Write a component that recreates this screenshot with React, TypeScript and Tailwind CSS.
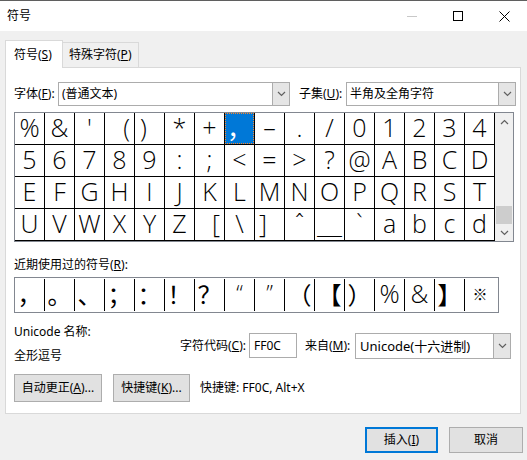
import React from 'react';

const gridRows = [
  '％＆＇（）＊＋，－．／０１２３４',
  '５６７８９：；＜＝＞？＠ＡＢＣＤ',
  'ＥＦＧＨＩＪＫＬＭＮＯＰＱＲＳＴ',
  'ＵＶＷＸＹＺ［＼］＾＿｀ａｂｃｄ',
];

const recent = '，。、；：！？“”（【）％＆】※';

const latin = "font-['Open_Sans','Noto_Sans',sans-serif] font-light";
const cjk = "font-['Noto_Sans_CJK_SC',sans-serif]";

// how each full-width glyph is drawn in the big grid
function glyph(ch: string) {
  switch (ch) {
    case '（':
      return { text: '(', cls: `${latin} justify-end pr-[4px]` };
    case '）':
      return { text: ')', cls: `${latin} justify-start pl-[5px]` };
    case '［':
      return { text: '[', cls: `${latin} justify-end pr-[4px]` };
    case '］':
      return { text: ']', cls: `${latin} justify-start pl-[4px]` };
    case '－':
      return { text: '–', cls: `${latin} justify-center` };
    case '＾':
      return { text: 'ˆ', cls: `${latin} justify-center` };
    case '，':
    case '＿':
      return { text: ch, cls: `${cjk} justify-center` };
    default:
      return { text: String.fromCharCode(ch.charCodeAt(0) - 0xfee0), cls: `${latin} justify-center` };
  }
}

function recentGlyph(ch: string) {
  if (ch === '※') return `${cjk} text-[15px]`;
  if (ch === '“' || ch === '”') return `${latin} text-[22px] pb-[6px]`;
  if (ch === '％' || ch === '＆') return `${latin} text-[25px]`;
  return `${cjk} text-[24px]`;
}

function Chevron({ up = false }: { up?: boolean }) {
  return (
    <svg width="9" height="6" viewBox="0 0 9 6" className="block">
      <polyline
        points={up ? '1,5 4.5,1.5 8,5' : '1,1 4.5,4.5 8,1'}
        fill="none"
        stroke="#606060"
        strokeWidth="1.2"
      />
    </svg>
  );
}

function Select({ width, text }: { width: string; text: string }) {
  return (
    <div className={`${width} h-[24px] flex border border-[#acacac] bg-white`}>
      <div className="flex-1 flex items-center pl-[3px] truncate">{text}</div>
      <div className="w-[17px] flex items-center justify-center bg-[#e5e5e5] border-l border-[#acacac]">
        <Chevron />
      </div>
    </div>
  );
}

export default function App() {
  return (
    <div className="w-[527px] h-[460px] bg-[#f0f0f0] border-t border-[#5f5f5f] text-[12px] leading-[16px] text-black font-['Noto_Sans','Noto_Sans_CJK_SC',sans-serif] overflow-hidden">
      {/* Title bar */}
      <div className="h-[30px] bg-white flex items-center">
        <div className="pl-[7px] flex-1">符号</div>
        <div className="w-[46px] h-full flex items-center justify-center">
          <div className="w-[10px] h-px bg-[#c8c8c8]" />
        </div>
        <div className="w-[46px] h-full flex items-center justify-center">
          <div className="w-[10px] h-[10px] border border-black" />
        </div>
        <div className="w-[46px] h-full flex items-center justify-center">
          <svg width="11" height="11" viewBox="0 0 11 11">
            <path d="M0.5 0.5 L10.5 10.5 M10.5 0.5 L0.5 10.5" stroke="black" strokeWidth="1" />
          </svg>
        </div>
      </div>

      <div className="px-[5px] pt-[9px]">
        {/* Tabs */}
        <div className="flex items-end h-[27px]">
          <div className="relative z-10 h-[28px] -mb-px w-[58px] bg-white border border-b-0 border-[#d9d9d9] flex items-center pl-[8px]">
            符号(<u>S</u>)
          </div>
          <div className="h-[25px] w-[76px] border border-l-0 border-b-0 border-[#d9d9d9] flex items-center pl-[6px]">
            特殊字符(<u>P</u>)
          </div>
        </div>

        {/* Panel */}
        <div className="w-[516px] h-[347px] bg-white border border-[#d9d9d9] pl-[8px] pt-[14px]">
          <div className="flex items-center h-[24px]">
            <div className="w-[44px]">字体(<u>F</u>):</div>
            <Select width="w-[232px]" text="(普通文本)" />
            <div className="w-[47px] ml-[9px]">子集(<u>U</u>):</div>
            <Select width="w-[170px]" text="半角及全角字符" />
          </div>

          {/* Symbol grid */}
          <div className="mt-[6px] w-[500px] h-[130px] border border-[#828790] flex">
            <div className="w-[480px]">
              {gridRows.map((row, r) => (
                <div key={r} className="flex">
                  {Array.from(row).map((ch, c) => {
                    const sel = r === 0 && c === 7;
                    const g = glyph(ch);
                    return (
                      <div key={c} className="w-[30px] h-[32px] border-r border-b border-black">
                        <div
                          className={`w-full h-full flex items-center text-[25px] leading-none pb-[3px] ${g.cls} ${
                            sel ? 'bg-[#0078d7] text-white border border-dotted border-[#ff8728]' : ''
                          }`}
                        >
                          {g.text}
                        </div>
                      </div>
                    );
                  })}
                </div>
              ))}
            </div>
            <div className="w-[18px] bg-[#f0f0f0] flex flex-col items-center">
              <div className="h-[17px] flex items-center">
                <Chevron up />
              </div>
              <div className="flex-1 w-full flex flex-col justify-end">
                <div className="h-[18px] mx-px bg-[#cdcdcd]" />
              </div>
              <div className="h-[17px] flex items-center">
                <Chevron />
              </div>
            </div>
          </div>

          <div className="mt-[15px] h-[16px]">
            近期使用过的符号(<u>R</u>):
          </div>

          {/* Recent symbols */}
          <div className="mt-[4px] w-[485px] h-[36px] border border-[#828790] flex items-center">
            {Array.from(recent).map((ch, i) => (
              <div
                key={i}
                className={`w-[30px] h-[32px] flex items-center justify-center leading-none pb-[3px] ${recentGlyph(ch)} ${
                  i < 15 ? 'border-r border-black' : ''
                }`}
              >
                {ch === '％' ? '%' : ch === '＆' ? '&' : ch}
              </div>
            ))}
          </div>

          {/* Unicode info */}
          <div className="mt-[7px] flex">
            <div className="w-[166px]">
              <div className="h-[24px] flex items-center">Unicode 名称:</div>
              <div className="h-[24px] flex items-center">全形逗号</div>
            </div>
            <div className="mt-[13px] flex items-center h-[25px]">
              <div className="w-[68px]">字符代码(<u>C</u>):</div>
              <div className="ml-px w-[48px] h-[25px] border border-[#acacac] flex items-center pl-[4px]">
                FF0C
              </div>
              <div className="ml-[8px] w-[50px]">来自(<u>M</u>):</div>
              <div className="w-[156px] h-[26px] flex border border-[#acacac] bg-white">
                <div className="flex-1 flex items-center pl-[4px] text-[13px]">Unicode(十六进制)</div>
                <div className="w-[17px] flex items-center justify-center bg-[#e5e5e5] border-l border-[#acacac]">
                  <Chevron />
                </div>
              </div>
            </div>
          </div>

          <div className="mt-[6px] flex items-center">
            <div className="w-[88px] h-[28px] bg-[#e1e1e1] border border-[#adadad] flex items-center justify-center">
              自动更正(<u>A</u>)...
            </div>
            <div className="ml-[11px] w-[77px] h-[28px] bg-[#e1e1e1] border border-[#adadad] flex items-center justify-center">
              快捷键(<u>K</u>)...
            </div>
            <div className="ml-[10px]">快捷键: FF0C, Alt+X</div>
          </div>
        </div>

        {/* Dialog buttons */}
        <div className="mt-[13px] flex justify-end gap-[11px] mr-[-1px]">
          <div className="w-[73px] h-[26px] bg-[#e1e1e1] border-2 border-[#0078d7] flex items-center justify-center">
            插入(<u>I</u>)
          </div>
          <div className="w-[74px] h-[26px] bg-[#e1e1e1] border border-[#adadad] flex items-center justify-center">
            取消
          </div>
        </div>
      </div>
    </div>
  );
}
